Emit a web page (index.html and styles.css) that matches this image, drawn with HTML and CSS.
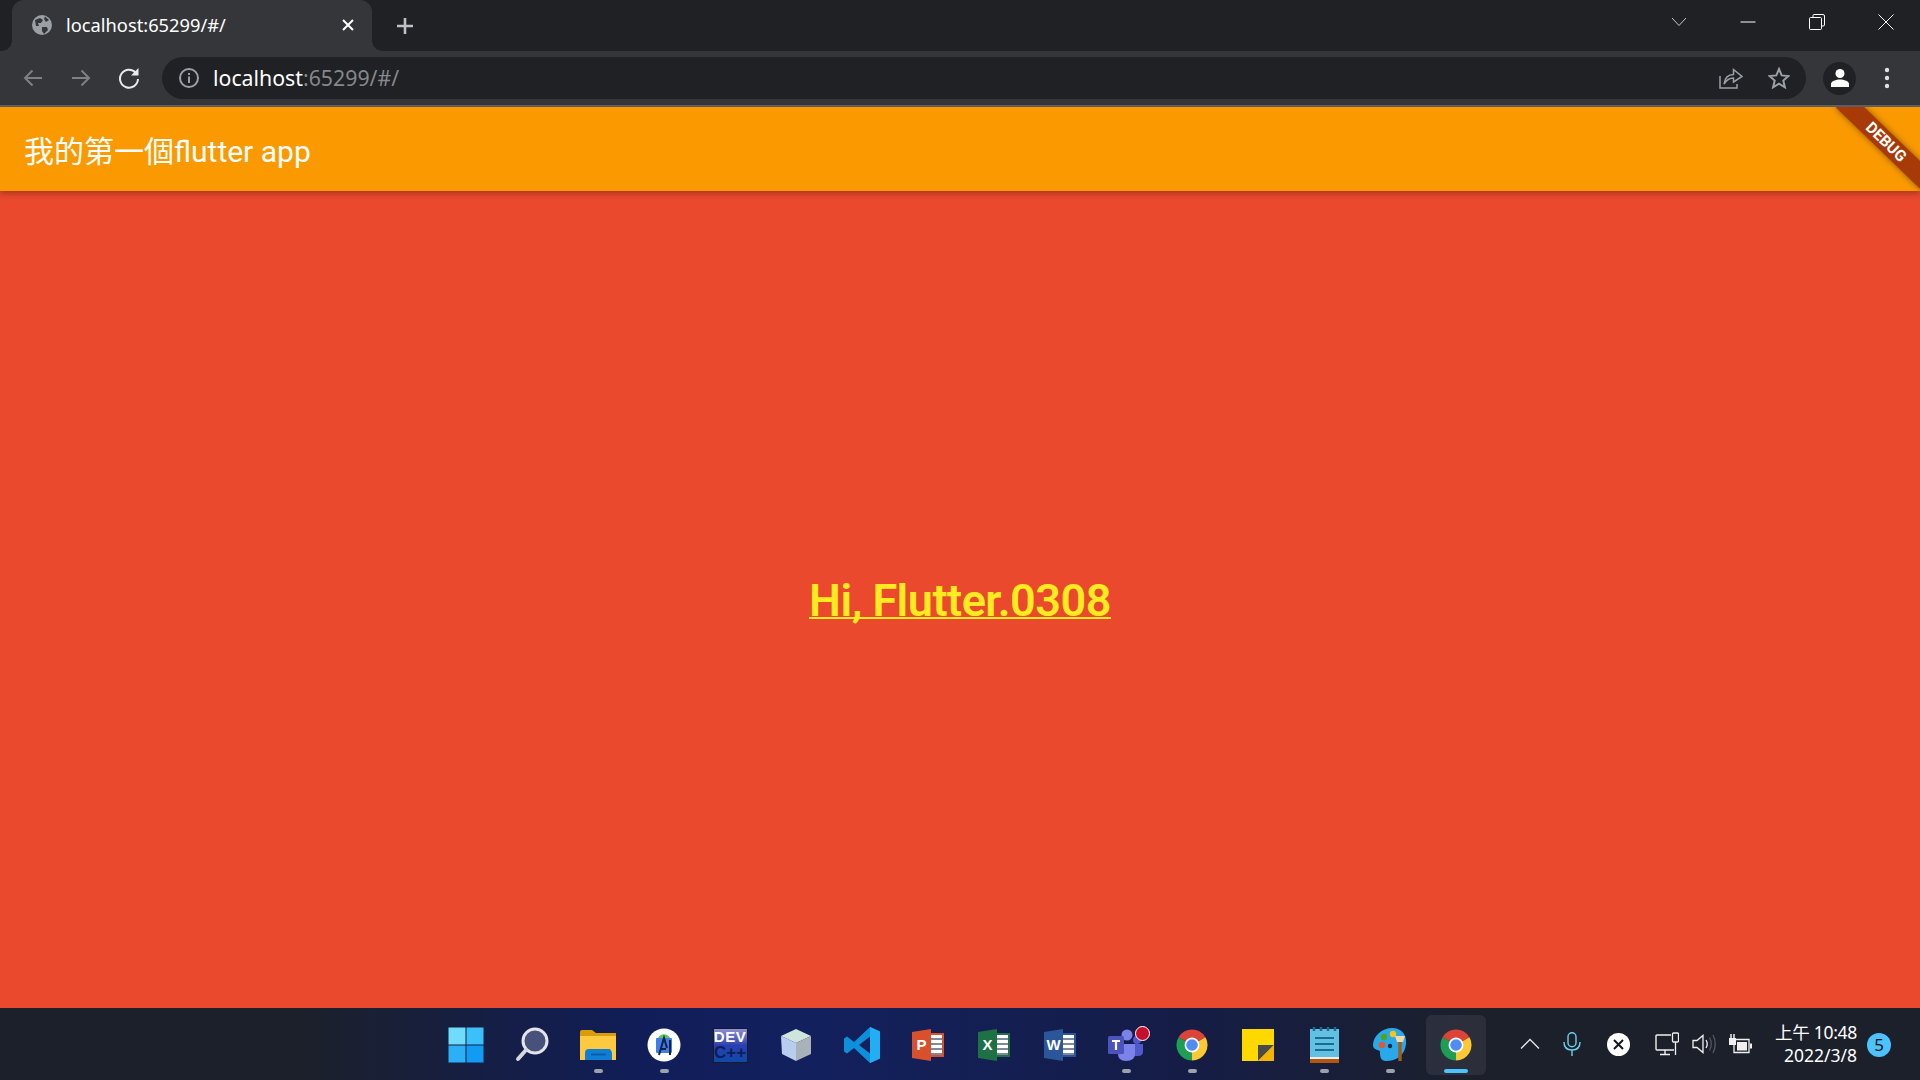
FILE: index.html
```html
<!DOCTYPE html>
<html lang="zh-Hant">
<head>
    <meta charset="UTF-8">
    <meta name="viewport" content="width=device-width, initial-scale=1.0">
    <title>localhost:65299/#/</title>
    <link rel="stylesheet" href="styles.css">
</head>
<body>

<svg class="defs" width="0" height="0">
    <defs>
        <symbol id="chrome" viewBox="0 0 48 48">
            <path d="M24 24 L5 13 A22 22 0 0 1 43 13 Z" fill="#db4437"/>
            <path d="M24 24 L43 13 A22 22 0 0 1 24 46 Z" fill="#fcc934"/>
            <path d="M24 24 L24 46 A22 22 0 0 1 5 13 Z" fill="#1e9e55"/>
            <circle cx="24" cy="24" r="10.500" fill="#fff"/>
            <circle cx="24" cy="24" r="8.200" fill="#4f8df5"/>
        </symbol>
    </defs>
</svg>

<div class="page">
    <div class="tabstrip">
        <div class="tab">
            <svg class="favicon" width="20" height="20" viewBox="0 0 20 20">
                <circle cx="10" cy="10" r="10" fill="#9aa0a6"/>
                <path d="M3 5 L8 3 L11 5 L9 8 L6 8 L7 11 L4 11 Z M13 1.500 L17 5 L14 7 L12 4 Z M10 12 L15 12 L16 15 L12 19 L10 16 Z" fill="#35363a"/>
            </svg>
            <span class="tab-title">localhost:65299/#/</span>
            <svg class="tab-close" width="12" height="12" viewBox="0 0 12 12">
                <path d="M1 1 L11 11 M11 1 L1 11" stroke="#fff" stroke-width="2"/>
            </svg>
        </div>
        <svg class="new-tab" width="18" height="18" viewBox="0 0 18 18">
            <path d="M9 1 V17 M1 9 H17" stroke="#bdc1c6" stroke-width="2.600"/>
        </svg>
        <div class="win-controls">
            <div class="win-btn">
                <svg width="16" height="10" viewBox="0 0 16 10"><path d="M1 1 L8 8.500 L15 1" fill="none" stroke="#c8c9cb" stroke-width="1"/></svg>
            </div>
            <div class="win-btn">
                <svg width="16" height="2" viewBox="0 0 16 2"><path d="M0.500 1 H15.500" stroke="#fff" stroke-width="1"/></svg>
            </div>
            <div class="win-btn">
                <svg width="16" height="16" viewBox="0 0 16 16"><path d="M4 3.500 V1.500 Q4 0.500 5 0.500 H14 Q15.500 0.500 15.500 2 V11 Q15.500 12 14 12 H12.500" fill="none" stroke="#fff"/><rect x="0.500" y="3.500" width="12" height="12" rx="1" fill="none" stroke="#fff"/></svg>
            </div>
            <div class="win-btn">
                <svg width="16" height="16" viewBox="0 0 16 16"><path d="M0.500 0.500 L15.500 15.500 M15.500 0.500 L0.500 15.500" stroke="#fff" stroke-width="1"/></svg>
            </div>
        </div>
    </div>

    <div class="toolbar">
        <div class="tool-btn">
            <svg width="20" height="18" viewBox="0 0 20 18"><path d="M19 9 H2 M9.500 1.500 L2 9 L9.500 16.500" fill="none" stroke="#7e8184" stroke-width="2"/></svg>
        </div>
        <div class="tool-btn">
            <svg width="20" height="18" viewBox="0 0 20 18"><path d="M1 9 H18 M10.500 1.500 L18 9 L10.500 16.500" fill="none" stroke="#7e8184" stroke-width="2"/></svg>
        </div>
        <div class="tool-btn">
            <svg width="22" height="22" viewBox="0 0 22 22"><path d="M18 6 A9 9 0 1 0 20 12" fill="none" stroke="#e8eaed" stroke-width="2"/><path d="M20.500 1 V8.500 H13 Z" fill="#e8eaed"/></svg>
        </div>
        <div class="omnibox">
            <svg class="info" width="20" height="20" viewBox="0 0 20 20">
                <circle cx="10" cy="10" r="9" fill="none" stroke="#9aa0a6" stroke-width="2"/>
                <path d="M10 8.500 V15 M10 5 V7" stroke="#9aa0a6" stroke-width="2"/>
            </svg>
            <span class="url">localhost<span class="url-rest">:65299/#/</span></span>
            <div class="omni-icons">
                <div class="tool-btn">
                    <svg width="24" height="22" viewBox="0 0 24 22"><path d="M1 9 V21 H18 V17" fill="none" stroke="#9aa0a6" stroke-width="1.500"/><path d="M5 17 C6 10 10 7.500 14.500 7.500 V2.500 L23 9.500 L14.500 15 V11 C10.500 11 7.500 13 5 17 Z" fill="none" stroke="#9aa0a6" stroke-width="1.500"/></svg>
                </div>
                <div class="tool-btn">
                    <svg width="22" height="22" viewBox="0 0 22 22"><path d="M11 2 L13.700 8.400 L20.500 9 L15.300 13.500 L16.900 20.300 L11 16.700 L5.100 20.300 L6.700 13.500 L1.500 9 L8.300 8.400 Z" fill="none" stroke="#9aa0a6" stroke-width="2"/></svg>
                </div>
            </div>
        </div>
        <div class="tool-btn profile">
            <div class="avatar">
                <svg width="20" height="20" viewBox="0 0 20 20"><circle cx="10" cy="5.500" r="4.500" fill="#fff"/><path d="M1 19 V16 C1 13 6 11.500 10 11.500 C14 11.500 19 13 19 16 V19 Z" fill="#fff"/></svg>
            </div>
        </div>
        <div class="tool-btn">
            <svg width="6" height="22" viewBox="0 0 6 22"><circle cx="3" cy="3" r="2.200" fill="#e0e0e0"/><circle cx="3" cy="11" r="2.200" fill="#e0e0e0"/><circle cx="3" cy="19" r="2.200" fill="#e0e0e0"/></svg>
        </div>
    </div>

    <div class="app">
        <div class="appbar">
            <span class="app-title">我的第一個flutter app</span>
            <div class="debug-corner">
                <div class="debug-band">DEBUG</div>
            </div>
        </div>
        <div class="content">
            <span class="hello">Hi, Flutter.0308</span>
        </div>
    </div>

    <div class="taskbar">
        <div class="task-icons">
            <div class="task-item">
                <svg width="36" height="36" viewBox="0 0 36 36">
                    <rect x="0.500" y="0.500" width="17" height="17" fill="#6fdcfb"/>
                    <rect x="18.500" y="0.500" width="17" height="17" fill="#3cc0f9"/>
                    <rect x="0.500" y="18.500" width="17" height="17" fill="#2cb0f5"/>
                    <rect x="18.500" y="18.500" width="17" height="17" fill="#129bf3"/>
                </svg>
            </div>
            <div class="task-item">
                <svg width="34" height="36" viewBox="0 0 34 36">
                    <circle cx="20" cy="14" r="12" fill="#48507c" stroke="#e3e5ea" stroke-width="3"/>
                    <path d="M11 23 L3 32" stroke="#d6d8dd" stroke-width="4" stroke-linecap="round"/>
                </svg>
            </div>
            <div class="task-item running">
                <svg width="36" height="32" viewBox="0 0 36 32">
                    <path d="M0 3 Q0 1 2 1 H12 L16 4 H36 V31 H0 Z" fill="#d99d0a"/>
                    <path d="M0 7 H36 V31 H0 Z" fill="#fdc93f"/>
                    <path d="M6 32 V25 Q6 21 10 21 H30 Q32 21 33 25 V32 Z" transform="translate(-1 -1)" fill="#0f7fd6"/>
                    <path d="M11 25.500 H26" stroke="#0b5ea6" stroke-width="2"/>
                </svg>
            </div>
            <div class="task-item running">
                <svg width="34" height="34" viewBox="0 0 34 34">
                    <circle cx="17" cy="17" r="16.500" fill="#fff"/>
                    <path d="M11 10 A6.500 6 0 0 1 23 10 Z" fill="#5fc56a"/>
                    <rect x="9" y="10" width="16" height="15" rx="1" fill="#3f7ee8"/>
                    <path d="M12 27 L17 10 L20 20 M14 21 H19" fill="none" stroke="#14233f" stroke-width="2"/>
                    <path d="M23 12 V27" stroke="#14233f" stroke-width="2"/>
                </svg>
            </div>
            <div class="task-item">
                <div class="devcpp">
                    <span class="dev-top">DEV</span>
                    <span class="dev-bot">C++</span>
                </div>
            </div>
            <div class="task-item">
                <svg width="32" height="34" viewBox="0 0 32 34">
                    <path d="M16 1 L31 8 L16 15 L1 8 Z" fill="#cfe4dc"/>
                    <path d="M1 8 L16 15 V33 L2 26 Z" fill="#b9cdf0"/>
                    <path d="M16 15 L31 8 V26 L16 33 Z" fill="#a9b2b8"/>
                </svg>
            </div>
            <div class="task-item">
                <svg width="36" height="36" viewBox="0 0 36 36">
                    <path d="M26 0 L36 4.500 V31.500 L26 36 L10 21 L3 26.500 L0 24.500 V11.500 L3 9.500 L10 15 Z M26 9.500 L15 18 L26 26.500 Z" fill="#0e8fdc" fill-rule="evenodd"/>
                    <path d="M26 0 L36 4.500 V31.500 L26 36 Z" fill="#22aef4"/>
                </svg>
            </div>
            <div class="task-item">
                <div class="office">
                    <div class="office-side ppt-side"></div>
                    <div class="office-front ppt">P</div>
                </div>
            </div>
            <div class="task-item">
                <div class="office">
                    <div class="office-side xls-side"></div>
                    <div class="office-front xls">X</div>
                </div>
            </div>
            <div class="task-item">
                <div class="office">
                    <div class="office-side doc-side"></div>
                    <div class="office-front doc">W</div>
                </div>
            </div>
            <div class="task-item running">
                <div class="teams">
                    <svg width="36" height="34" viewBox="0 0 36 34">
                        <circle cx="19" cy="7" r="5.500" fill="#7b83eb"/>
                        <circle cx="29" cy="12" r="4" fill="#5059c9"/>
                        <path d="M24 16 H35 V24 Q35 28 30 28 H24 Z" fill="#5059c9"/>
                        <path d="M10 16 H27 V26 Q27 33 18 33 Q10 33 10 26 Z" fill="#7b83eb"/>
                        <rect x="0" y="8" width="16" height="18" rx="1.500" fill="#4b53bc"/>
                        <path d="M4 13 H12 M8 13 V22" stroke="#fff" stroke-width="2.200"/>
                    </svg>
                    <span class="teams-badge"></span>
                </div>
            </div>
            <div class="task-item running">
                <svg width="34" height="34"><use href="#chrome"/></svg>
            </div>
            <div class="task-item">
                <svg width="33" height="32" viewBox="0 0 33 32">
                    <path d="M0 0 H32 V32 H0 Z" fill="#ffd800"/>
                    <path d="M16 32 L32 16 H16 Z" fill="#4a4a4a"/>
                    <path d="M16 32 L32 16 V32 Z" fill="#f3b400"/>
                </svg>
            </div>
            <div class="task-item running">
                <svg width="29" height="36" viewBox="0 0 29 36">
                    <rect x="0" y="2" width="29" height="33" fill="#62c0e2"/>
                    <rect x="0" y="30" width="29" height="2" fill="#e8eef0"/>
                    <rect x="0" y="32" width="29" height="4" fill="#b5560f"/>
                    <path d="M5 11 H24 M5 17 H24 M5 23 H24" stroke="#1a6c93" stroke-width="2"/>
                    <path d="M4 0 V4 M11 0 V4 M18 0 V4 M25 0 V4" stroke="#1a6c93" stroke-width="2.500"/>
                </svg>
            </div>
            <div class="task-item running">
                <svg width="36" height="36" viewBox="0 0 36 36">
                    <path d="M20 1 C30 1 35 8 34 17 C33 27 26 34 14 34 C8 34 8 28 8 25 C8 22 1 24 1 18 C1 9 10 1 20 1 Z" fill="#29a8ea"/>
                    <circle cx="10" cy="18" r="3.200" fill="#e2572b"/>
                    <circle cx="12" cy="10" r="3.200" fill="#4fa31e"/>
                    <circle cx="21" cy="7" r="3.200" fill="#fcc419"/>
                    <circle cx="18" cy="19" r="2.200" fill="#1c2a44"/>
                    <path d="M28 14 V34" stroke="#a05c14" stroke-width="3.500"/>
                    <path d="M23 9 H33 L31 15 H25 Z" fill="#f1d9a8"/>
                </svg>
            </div>
            <div class="task-item running active">
                <svg width="34" height="34"><use href="#chrome"/></svg>
            </div>
        </div>

        <div class="tray">
            <svg class="tray-chevron" width="20" height="12" viewBox="0 0 20 12"><path d="M1 10.500 L10 1.500 L19 10.500" fill="none" stroke="#e6e6e6" stroke-width="1.300"/></svg>
            <svg class="tray-mic" width="18" height="24" viewBox="0 0 18 24"><rect x="5" y="0.700" width="8" height="14" rx="4" fill="none" stroke="#6fd0ea" stroke-width="1.400"/><path d="M1 10 C1 15 4 18 9 18 C14 18 17 15 17 10 M9 18 V24" fill="none" stroke="#6fd0ea" stroke-width="1.400"/></svg>
            <svg class="tray-x" width="23" height="23" viewBox="0 0 23 23"><circle cx="11.500" cy="11.500" r="11.500" fill="#fff"/><path d="M7 7 L16 16 M16 7 L7 16" stroke="#15181f" stroke-width="2"/></svg>
            <svg class="tray-net" width="24" height="24" viewBox="0 0 24 24"><path d="M16 3 H2 Q1 3 1 4 V17 Q1 18 2 18 H19 M10 18 V22 M5 22.500 H15" fill="none" stroke="#f0f0f0" stroke-width="1.400"/><rect x="17.500" y="1" width="6" height="9" rx="1" fill="none" stroke="#f0f0f0" stroke-width="1.300"/><path d="M20.500 10 V23" stroke="#f0f0f0" stroke-width="1.300"/></svg>
            <svg class="tray-vol" width="25" height="20" viewBox="0 0 25 20"><path d="M1 6.500 H5 L11 1.500 V18.500 L5 13.500 H1 Z" fill="none" stroke="#f0f0f0" stroke-width="1.300"/><path d="M14 6 Q16.500 10 14 14" fill="none" stroke="#f0f0f0" stroke-width="1.300"/><path d="M17.500 3.500 Q21 10 17.500 16.500 M21 1 Q25.500 10 21 19" fill="none" stroke="#55585f" stroke-width="1.300"/></svg>
            <svg class="tray-bat" width="24" height="20" viewBox="0 0 24 20"><path d="M3 0 V5 M6 0 V5 M4.500 11 V6" stroke="#f0f0f0" stroke-width="1.500" fill="none"/><rect x="1" y="4" width="7" height="7" fill="#f0f0f0"/><path d="M8 5.500 H21 V18.500 H6 V11" fill="none" stroke="#f0f0f0" stroke-width="1.300"/><rect x="9" y="8" width="10" height="8.500" fill="#f0f0f0"/><rect x="22" y="9.500" width="2" height="5" fill="#f0f0f0"/></svg>
            <div class="clock">
                <span class="clock-time">上午 10:48</span>
                <span>2022/3/8</span>
            </div>
            <div class="notify-badge">5</div>
        </div>
    </div>
</div>

</body>
</html>
```

FILE: styles.css
```css
* {
    box-sizing: border-box;
}
body {
    margin: 0;
    background-color: #ea492d;
    font-family: "Noto Sans", "Noto Sans CJK TC", sans-serif;
}
.defs {
    position: absolute;
}
.page {
    display: flex;
    flex-direction: column;
    width: 1920px;
    height: 1080px;
    overflow: hidden;
}

/* browser chrome */
.tabstrip {
    display: flex;
    align-items: flex-start;
    height: 51px;
    padding-left: 12px;
    background-color: #202124;
}
.tab {
    position: relative;
    display: flex;
    align-items: center;
    width: 360px;
    height: 51px;
    padding: 0 18px 1px 20px;
    background-color: #35363a;
    border-radius: 12px 12px 0 0;
}
.tab::before,
.tab::after {
    content: "";
    position: absolute;
    bottom: 0;
    width: 10px;
    height: 10px;
}
.tab::before {
    left: -10px;
    background: radial-gradient(circle at 0 0, transparent 9.500px, #35363a 10px);
}
.tab::after {
    right: -10px;
    background: radial-gradient(circle at 100% 0, transparent 9.500px, #35363a 10px);
}
.tab-title {
    flex: 1;
    margin: 0 0 1px 14px;
    font-size: 18.300px;
    color: #fff;
}
.new-tab {
    margin: 17px 0 0 24px;
}
.win-controls {
    display: flex;
    margin-left: auto;
}
.win-btn {
    display: flex;
    align-items: center;
    justify-content: center;
    width: 69px;
    height: 43px;
}
.toolbar {
    display: flex;
    align-items: center;
    height: 56px;
    padding: 0 9px;
    background-color: #35363a;
    border-bottom: 2px solid #606165;
}
.tool-btn {
    display: flex;
    align-items: center;
    justify-content: center;
    flex: none;
    width: 48px;
    height: 48px;
}
.omnibox {
    display: flex;
    flex: 1;
    align-items: center;
    height: 42px;
    margin: 0 9px;
    padding: 0 3px 0 17px;
    background-color: #202124;
    border-radius: 21px;
}
.url {
    flex: 1;
    margin: 0 0 1px 14px;
    font-size: 21.300px;
    color: #fff;
}
.url-rest {
    color: #85878a;
}
.omni-icons {
    display: flex;
}
.profile {
    padding-left: 1px;
}
.avatar {
    display: flex;
    align-items: center;
    justify-content: center;
    width: 33px;
    height: 33px;
    background-color: #202124;
    border-radius: 50%;
}

/* flutter app */
.app {
    display: flex;
    flex: 1;
    flex-direction: column;
    background-color: #ea492d;
}
.appbar {
    position: relative;
    display: flex;
    align-items: center;
    height: 84px;
    padding-left: 24px;
    background-color: #fa9a00;
    box-shadow: 0 3px 6px rgba(0, 0, 0, 0.25);
}
.app-title {
    font-family: Roboto, "Noto Sans CJK TC", sans-serif;
    font-size: 30px;
    color: #fff;
}
.debug-corner {
    position: absolute;
    top: 0;
    right: 0;
    width: 90px;
    height: 84px;
    overflow: hidden;
}
.debug-band {
    position: absolute;
    top: 25px;
    left: -4px;
    width: 120px;
    height: 20px;
    transform: rotate(44deg);
    background-color: #a83a08;
    box-shadow: 0 0 6px rgba(0, 0, 0, 0.45);
    font-family: Roboto, sans-serif;
    font-size: 15.500px;
    font-weight: 700;
    line-height: 20px;
    text-align: center;
    color: #fff;
}
.content {
    display: flex;
    flex: 1;
    align-items: center;
    justify-content: center;
    padding-top: 2px;
}
.hello {
    font-family: Roboto, sans-serif;
    font-size: 45px;
    font-weight: 600;
    letter-spacing: -0.500px;
    color: #ffeb1f;
    text-decoration: underline;
    text-decoration-thickness: 2px;
    text-decoration-skip-ink: none;
}

/* windows taskbar */
.taskbar {
    position: relative;
    display: flex;
    align-items: center;
    height: 72px;
    padding-top: 2px;
    background: linear-gradient(90deg, #1c202b 300px, #101d58 640px, #12205e 800px, #151d45 1200px, #1c202b 1480px);
}
.task-icons {
    display: flex;
    margin-left: 433px;
}
.task-item {
    position: relative;
    display: flex;
    align-items: center;
    justify-content: center;
    width: 66px;
    height: 60px;
}
.task-item.running::after {
    content: "";
    position: absolute;
    bottom: 2px;
    left: 29px;
    width: 9px;
    height: 4px;
    background-color: #9ba1ad;
    border-radius: 2px;
}
.task-item.active {
    background-color: rgba(255, 255, 255, 0.07);
    border-radius: 6px;
    margin: 0 3px;
    width: 60px;
}
.task-item.active::after {
    left: 18px;
    width: 24px;
    background-color: #4cc2ff;
}
.devcpp {
    display: flex;
    flex-direction: column;
    width: 35px;
    height: 35px;
    background: linear-gradient(180deg, #8f8fd6 0, #2a3fae 50%, #0f4aa8 100%);
    border: 1px solid #1a1a2a;
    font-family: "Liberation Sans", sans-serif;
    font-weight: 700;
    line-height: 16px;
    text-align: center;
}
.dev-top {
    font-size: 15px;
    letter-spacing: 0.500px;
    color: #fff;
}
.dev-bot {
    font-size: 17px;
    white-space: nowrap;
    color: #0b1d5c;
}
.office {
    position: relative;
    width: 32px;
    height: 32px;
}
.office-side {
    position: absolute;
    top: 4px;
    right: 0;
    width: 20px;
    height: 24px;
    background-color: #fff;
    background-image: repeating-linear-gradient(180deg, transparent 0, transparent 3px, #7d8a99 3px, #7d8a99 5px);
    border: 2px solid currentColor;
}
.office-front {
    position: absolute;
    top: 0;
    left: 0;
    width: 19px;
    height: 32px;
    clip-path: polygon(0 3px, 100% 0, 100% 100%, 0 29px);
    font-family: "Liberation Sans", sans-serif;
    font-size: 15px;
    font-weight: 700;
    line-height: 32px;
    text-align: center;
    color: #fff;
}
.ppt {
    background-color: #d9512c;
}
.ppt-side {
    color: #d9512c;
}
.xls {
    background-color: #1e7145;
}
.xls-side {
    color: #1e7145;
}
.doc {
    background-color: #2b579a;
}
.doc-side {
    color: #2b579a;
}
.teams {
    position: relative;
    display: flex;
}
.teams-badge {
    position: absolute;
    top: -2px;
    right: -6px;
    width: 15px;
    height: 15px;
    background-color: #c50f2c;
    border: 1px solid #fff;
    border-radius: 50%;
}
.tray {
    position: absolute;
    top: 0;
    left: 1510px;
    display: flex;
    align-items: center;
    height: 72px;
}
.tray-chevron {
    margin-left: 10px;
}
.tray-mic {
    margin-left: 23px;
}
.tray-x {
    margin-left: 26px;
}
.tray-net {
    margin-left: 25px;
}
.tray-vol {
    margin-left: 13px;
}
.tray-bat {
    margin-left: 11px;
}
.clock {
    display: flex;
    flex-direction: column;
    align-items: flex-end;
    width: 104px;
    margin-left: 1px;
    font-size: 17.500px;
    line-height: 23px;
    color: #fff;
}
.clock-time {
    letter-spacing: -0.300px;
}
.notify-badge {
    width: 24px;
    height: 24px;
    margin: 2px 0 0 10px;
    background-color: #4cc2ff;
    border-radius: 50%;
    font-size: 17px;
    line-height: 24px;
    text-align: center;
    color: #111;
}
```
